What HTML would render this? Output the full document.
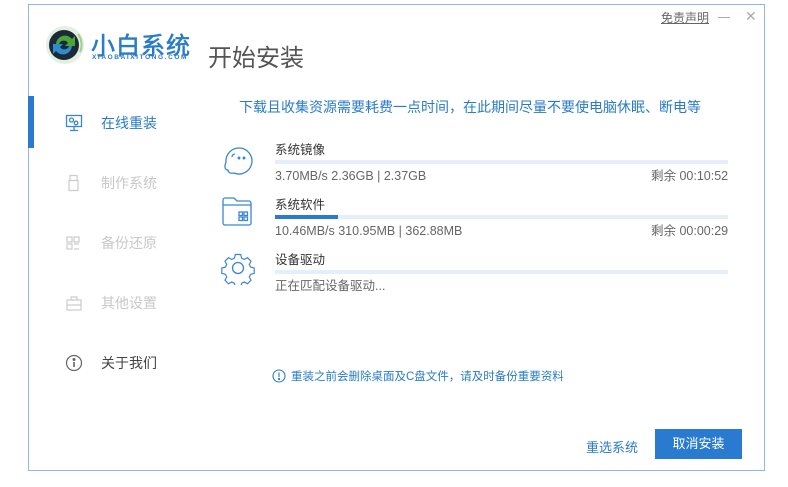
<!DOCTYPE html>
<html><head><meta charset="utf-8"><style>
*{margin:0;padding:0;box-sizing:border-box}
body{width:788px;height:487px;background:#fff;position:relative;overflow:hidden;font-family:"Liberation Sans","Noto Sans CJK SC",sans-serif}
.win{position:absolute;left:28px;top:4px;width:737px;height:467px;border:1px solid #8fb8e8;background:#fff}
.a{position:absolute;white-space:nowrap}
.bar{position:absolute;left:275px;width:453px;height:4px;background:#e6eef9}
.nav{position:absolute;left:101px;font-size:14px;color:#c8c8c8}
.sub{font-size:12.5px;color:#666;line-height:16px;height:16px}
</style></head><body>
<div class="win"></div>
<svg class="a" style="left:44px;top:24px" width="42" height="42" viewBox="0 0 42 42">
<circle cx="21" cy="21" r="19" fill="#e3efe0"/>
<circle cx="20" cy="21" r="15" fill="#1b2a36"/>
<path d="M12 20a9 9 0 0 1 16-5l3-3v10h-10l3-3a5 5 0 0 0-9 1z" fill="#4aa63a"/>
<path d="M28 22a9 9 0 0 1-16 5l-3 3v-10h10l-3 3a5 5 0 0 0 9-1z" fill="#2f8ccc"/>
<path d="M34 10a18 18 0 0 1 2 18" stroke="#9fd08a" stroke-width="2" fill="none"/>
</svg>
<div class="a" style="left:91px;top:26px;font-size:24px;color:#2a7bc8;letter-spacing:1px;-webkit-text-stroke:0.6px #2a7bc8">小白系统</div>
<div class="a" style="left:92px;top:54px;font-size:6.5px;color:#2a7bc8;letter-spacing:1.6px;font-weight:bold">XIAOBAIXITONG.COM</div>
<div class="a" style="left:208px;top:38px;font-size:24px;color:#555">开始安装</div>
<div class="a" style="left:661px;top:9px;font-size:12px;color:#666;text-decoration:underline">免责声明</div>
<div class="a" style="left:718px;top:17px;width:12px;height:1px;background:#aaa"></div>
<div class="a" style="left:745px;top:8px;font-size:14px;color:#aaa">✕</div>
<div class="a" style="left:28px;top:96px;width:6px;height:52px;background:#2a7bd0"></div>
<svg class="a" style="left:65px;top:114px" width="18" height="18" viewBox="0 0 18 18" fill="none" stroke="#3a86d4" stroke-width="1.3"><rect x="1.5" y="1.5" width="15" height="11"/><circle cx="6.5" cy="6" r="2"/><circle cx="11" cy="9" r="1.8"/><path d="M9 13v3M5 16.5h8"/></svg>
<div class="nav" style="top:113px;color:#2a7bc8">在线重装</div>
<svg class="a" style="left:65px;top:174px" width="18" height="18" viewBox="0 0 18 18" fill="none" stroke="#ccc" stroke-width="1.2"><path d="M5 1.5h7v5h-7z M4 6.5h9v10h-9z"/></svg>
<div class="nav" style="top:173px">制作系统</div>
<svg class="a" style="left:65px;top:234px" width="18" height="18" viewBox="0 0 18 18" fill="none" stroke="#ccc" stroke-width="1.2"><rect x="2" y="3" width="5" height="5"/><rect x="2" y="10" width="5" height="5"/><rect x="9" y="3" width="5" height="5"/><path d="M9 10h5M9 15h5"/></svg>
<div class="nav" style="top:233px">备份还原</div>
<svg class="a" style="left:65px;top:294px" width="18" height="18" viewBox="0 0 18 18" fill="none" stroke="#ccc" stroke-width="1.2"><rect x="2" y="6" width="14" height="10"/><path d="M6 6V3h6v3M2 11h14"/></svg>
<div class="nav" style="top:293px">其他设置</div>
<svg class="a" style="left:65px;top:354px" width="18" height="18" viewBox="0 0 18 18" fill="none" stroke="#666" stroke-width="1.2"><circle cx="9" cy="9" r="7.5"/><path d="M9 8v5" stroke-width="1.6"/><circle cx="9" cy="5.5" r=".9" fill="#666"/></svg>
<div class="nav" style="top:353px;color:#444">关于我们</div>
<div class="a" style="left:239px;top:97px;font-size:14px;color:#2a7bc8">下载且收集资源需要耗费一点时间，在此期间尽量不要使电脑休眠、断电等</div>
<svg class="a" style="left:220px;top:140px" width="36" height="36" viewBox="0 0 36 36" fill="none" stroke="#3a86d4" stroke-width="1.3"><path d="M6 22a13 13 0 1 1 8 11c-4 1-6-1-6-3-3 0-4-3-2-8z"/><path d="M12 17a3 3 0 0 1 3-3"/><circle cx="19" cy="18" r=".8" fill="#3a86d4"/><circle cx="24" cy="18" r=".8" fill="#3a86d4"/></svg>
<div class="a sub" style="left:275px;top:142px;color:#333">系统镜像</div>
<div class="bar" style="top:160px"></div>
<div class="a sub" style="left:275px;top:168px">3.70MB/s 2.36GB | 2.37GB</div>
<div class="a sub" style="left:651px;top:168px">剩余 00:10:52</div>
<svg class="a" style="left:221px;top:196px" width="34" height="32" viewBox="0 0 34 32" fill="none" stroke="#3a86d4" stroke-width="1.3"><path d="M2 4a2 2 0 0 1 2-2h9l3 3h12a2 2 0 0 1 2 2v20a2 2 0 0 1-2 2H4a2 2 0 0 1-2-2z"/><path d="M2 9h28"/><rect x="18" y="16" width="3.5" height="3.5"/><rect x="23" y="16" width="3.5" height="3.5"/><rect x="18" y="21" width="3.5" height="3.5"/><rect x="23" y="21" width="3.5" height="3.5"/></svg>
<div class="a sub" style="left:275px;top:197px;color:#333">系统软件</div>
<div class="bar" style="top:215px"></div>
<div class="a" style="left:275px;top:215px;width:63px;height:4px;background:#2a7bd0"></div>
<div class="a sub" style="left:275px;top:223px">10.46MB/s 310.95MB | 362.88MB</div>
<div class="a sub" style="left:651px;top:223px">剩余 00:00:29</div>
<svg class="a" style="left:221px;top:251px" width="34" height="34" viewBox="0 0 34 34" fill="none" stroke="#3a86d4" stroke-width="1.3"><path d="M14 2h6l1 4 3 1.5 3.5-2 4 4-2 3.5 1.5 3 4 1v6l-4 1-1.5 3 2 3.5-4 4-3.5-2-3 1.5-1 4h-6l-1-4-3-1.5-3.5 2-4-4 2-3.5-1.5-3-4-1v-6l4-1 1.5-3-2-3.5 4-4 3.5 2 3-1.5z" transform="translate(17 17) scale(.9) translate(-17 -17)"/><circle cx="17" cy="17" r="5.5"/></svg>
<div class="a sub" style="left:275px;top:252px;color:#333">设备驱动</div>
<div class="bar" style="top:270px"></div>
<div class="a sub" style="left:275px;top:278px">正在匹配设备驱动...</div>
<svg class="a" style="left:272px;top:369px" width="14" height="14" viewBox="0 0 14 14" fill="none" stroke="#2a7bc8" stroke-width="1.1"><circle cx="7" cy="7" r="6"/><path d="M7 3.5v4.5"/><circle cx="7" cy="10" r=".6" fill="#2a7bc8"/></svg>
<div class="a" style="left:291px;top:368px;font-size:11.5px;color:#2a7bc8">重装之前会删除桌面及C盘文件，请及时备份重要资料</div>
<div class="a" style="left:586px;top:437px;font-size:13px;color:#2a7bc8">重选系统</div>
<div class="a" style="left:655px;top:429px;width:87px;height:30px;background:#2a7bd0;color:#fff;font-size:13px;text-align:center;line-height:30px">取消安装</div>
</body></html>
